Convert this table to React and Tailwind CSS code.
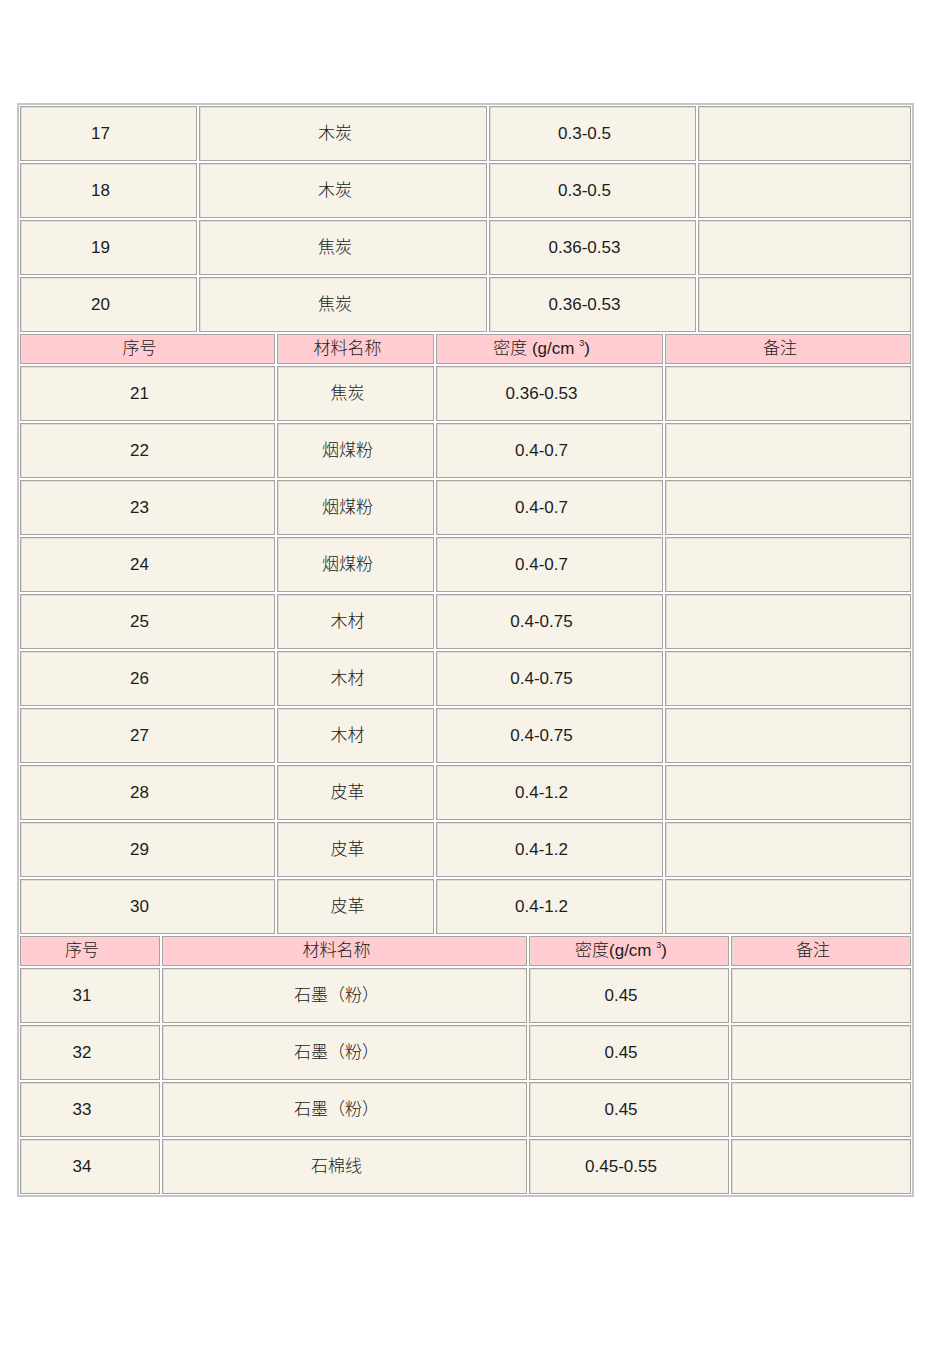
const font = { fontFamily: '"Liberation Sans", Arial, "Noto Sans CJK SC", sans-serif' }

const sections = [
  {
    cols: 'grid-cols-[177px_288px_207px_1fr]',
    header: null,
    rows: [
      ['17', '木炭', '0.3-0.5'],
      ['18', '木炭', '0.3-0.5'],
      ['19', '焦炭', '0.36-0.53'],
      ['20', '焦炭', '0.36-0.53'],
    ],
  },
  {
    cols: 'grid-cols-[255px_157px_227px_1fr]',
    header: 'spaced',
    rows: [
      ['21', '焦炭', '0.36-0.53'],
      ['22', '烟煤粉', '0.4-0.7'],
      ['23', '烟煤粉', '0.4-0.7'],
      ['24', '烟煤粉', '0.4-0.7'],
      ['25', '木材', '0.4-0.75'],
      ['26', '木材', '0.4-0.75'],
      ['27', '木材', '0.4-0.75'],
      ['28', '皮革', '0.4-1.2'],
      ['29', '皮革', '0.4-1.2'],
      ['30', '皮革', '0.4-1.2'],
    ],
  },
  {
    cols: 'grid-cols-[140px_365px_200px_1fr]',
    header: 'tight',
    rows: [
      ['31', '石墨（粉）', '0.45'],
      ['32', '石墨（粉）', '0.45'],
      ['33', '石墨（粉）', '0.45'],
      ['34', '石棉线', '0.45-0.55'],
    ],
  },
]

const cellBase = 'flex items-center justify-center pr-4 border border-[#a4a4a4] shadow-[inset_1px_1px_0_#e2ded4]'

function HeaderRow({ cols, kind }) {
  const cell = `${cellBase} h-[30px] bg-[#ffccd1]`
  return (
    <div className={`grid ${cols} gap-[2px]`}>
      <div className={cell}>序号</div>
      <div className={cell}>材料名称</div>
      <div className={cell}>
        <span>
          {kind === 'spaced' ? '密度 (g/cm ' : '密度(g/cm '}
          <span className="text-[9px] relative -top-[8px]">3</span>)
        </span>
      </div>
      <div className={cell}>备注</div>
    </div>
  )
}

export default function App() {
  return (
    <div className="min-h-[1345px] w-[950px] bg-white pt-[103px] text-[17px] font-light text-[#1c1c1c]" style={font}>
      <div className="ml-[17px] w-[897px] border-2 border-[#c6c6c6] p-px flex flex-col gap-[2px]">
        {sections.map((s, si) => (
          <div key={si} className="flex flex-col gap-[2px]">
            {s.header && <HeaderRow cols={s.cols} kind={s.header} />}
            {s.rows.map((r) => (
              <div key={r[0]} className={`grid ${s.cols} gap-[2px]`}>
                {r.map((t, i) => (
                  <div key={i} className={`${cellBase} h-[55px] bg-[#f7f3e8]`}>{t}</div>
                ))}
                <div className={`${cellBase} h-[55px] bg-[#f7f3e8]`} />
              </div>
            ))}
          </div>
        ))}
      </div>
    </div>
  )
}
